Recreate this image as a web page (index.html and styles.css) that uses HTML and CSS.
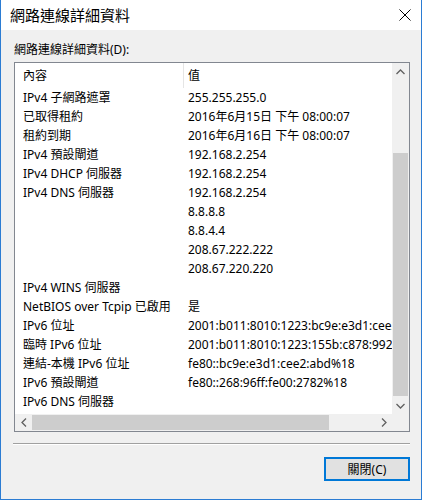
FILE: index.html
```html
<!DOCTYPE html>
<html lang="zh-Hant">
  <head>
    <meta charset="UTF-8" />
    <meta name="viewport" content="width=device-width, initial-scale=1.0" />
    <title>網路連線詳細資料</title>
    <link rel="stylesheet" href="styles.css">
  </head>
  <body>
    <div class="window">
      <!-- title bar -->
      <div class="titlebar">
        <span class="title">網路連線詳細資料</span>
        <span class="close">
          <svg width="12" height="12" viewBox="0 0 12 12">
            <path d="M0.5 0.5 L11.5 11.5 M11.5 0.5 L0.5 11.5" stroke="#000" stroke-width="1" fill="none" />
          </svg>
        </span>
      </div>

      <div class="content">
        <div class="label">網路連線詳細資料(D):</div>

        <div class="listbox">
          <div class="list-view">
            <div class="list-header">
              <div class="col-name">內容</div>
              <div class="col-value">值</div>
            </div>
            <div class="row"><div class="col-name">IPv4 子網路遮罩</div><div class="col-value">255.255.255.0</div></div>
            <div class="row"><div class="col-name">已取得租約</div><div class="col-value">2016年6月15日 下午 08:00:07</div></div>
            <div class="row"><div class="col-name">租約到期</div><div class="col-value">2016年6月16日 下午 08:00:07</div></div>
            <div class="row"><div class="col-name">IPv4 預設閘道</div><div class="col-value">192.168.2.254</div></div>
            <div class="row"><div class="col-name">IPv4 DHCP 伺服器</div><div class="col-value">192.168.2.254</div></div>
            <div class="row"><div class="col-name">IPv4 DNS 伺服器</div><div class="col-value">192.168.2.254</div></div>
            <div class="row"><div class="col-name"></div><div class="col-value">8.8.8.8</div></div>
            <div class="row"><div class="col-name"></div><div class="col-value">8.8.4.4</div></div>
            <div class="row"><div class="col-name"></div><div class="col-value">208.67.222.222</div></div>
            <div class="row"><div class="col-name"></div><div class="col-value">208.67.220.220</div></div>
            <div class="row"><div class="col-name">IPv4 WINS 伺服器</div><div class="col-value"></div></div>
            <div class="row"><div class="col-name">NetBIOS over Tcpip 已啟用</div><div class="col-value">是</div></div>
            <div class="row"><div class="col-name">IPv6 位址</div><div class="col-value">2001:b011:8010:1223:bc9e:e3d1:cee2:abd</div></div>
            <div class="row"><div class="col-name">臨時 IPv6 位址</div><div class="col-value">2001:b011:8010:1223:155b:c878:9921:4f0a</div></div>
            <div class="row"><div class="col-name">連結-本機 IPv6 位址</div><div class="col-value">fe80::bc9e:e3d1:cee2:abd%18</div></div>
            <div class="row"><div class="col-name">IPv6 預設閘道</div><div class="col-value">fe80::268:96ff:fe00:2782%18</div></div>
            <div class="row"><div class="col-name">IPv6 DNS 伺服器</div><div class="col-value"></div></div>
          </div>

          <div class="vscroll">
            <div class="arrow">
              <svg width="9" height="6" viewBox="0 0 9 6"><path d="M0.5 5 L4.5 1 L8.5 5" stroke="#606060" stroke-width="1.3" fill="none" /></svg>
            </div>
            <div class="track v-track">
              <div class="thumb v-thumb"></div>
            </div>
            <div class="arrow">
              <svg width="9" height="6" viewBox="0 0 9 6"><path d="M0.5 1 L4.5 5 L8.5 1" stroke="#606060" stroke-width="1.3" fill="none" /></svg>
            </div>
          </div>

          <div class="hscroll">
            <div class="arrow">
              <svg width="6" height="9" viewBox="0 0 6 9"><path d="M5 0.5 L1 4.5 L5 8.5" stroke="#606060" stroke-width="1.3" fill="none" /></svg>
            </div>
            <div class="track h-track">
              <div class="thumb h-thumb"></div>
            </div>
            <div class="arrow">
              <svg width="6" height="9" viewBox="0 0 6 9"><path d="M1 0.5 L5 4.5 L1 8.5" stroke="#606060" stroke-width="1.3" fill="none" /></svg>
            </div>
          </div>

          <div class="corner"></div>
        </div>

        <div class="separator"></div>

        <div class="footer">
          <button class="btn-close">關閉(C)</button>
        </div>
      </div>
    </div>
  </body>
</html>
```

FILE: styles.css
```css
body {
  margin: 0;
  padding: 0;
  font-family: "Noto Sans", "Noto Sans CJK TC", sans-serif;
  font-size: 12px;
  color: #000;
  background-color: #fff;
}
.window {
  width: 422px;
  height: 500px;
  box-sizing: border-box;
  border: 1px solid #2b7cd3;
  border-top: none;
  display: flex;
  flex-direction: column;
  background-color: #f0f0f0;
}
.titlebar {
  height: 30px;
  background-color: #fff;
  display: flex;
  align-items: center;
  justify-content: space-between;
  padding: 0 10px 0 9px;
}
.title {
  font-size: 15px;
  line-height: 20px;
}
.close {
  display: flex;
  width: 12px;
  height: 12px;
}
.content {
  flex: 1;
  display: flex;
  flex-direction: column;
  padding: 11px 11px 0 12px;
}
.label {
  line-height: 18px;
  padding-left: 1px;
  margin-bottom: 3px;
}
.listbox {
  height: 370px;
  box-sizing: border-box;
  border: 1px solid #828790;
  background-color: #fff;
  display: grid;
  grid-template-columns: 1fr 17px;
  grid-template-rows: 1fr 17px;
  margin-left: 1px;
}
.list-view {
  overflow: hidden;
  white-space: nowrap;
}
.list-header,
.row {
  display: flex;
}
.list-header {
  height: 25px;
  line-height: 25px;
}
.row {
  height: 19px;
  line-height: 19px;
}
.col-name {
  width: 160px;
  flex-shrink: 0;
  padding-left: 8px;
}
.col-value {
  flex-shrink: 0;
  padding-left: 5px;
}
.list-header .col-name {
  border-right: 1px solid #e5e5e5;
}
.list-header .col-value {
  padding-left: 4px;
}
.vscroll {
  display: flex;
  flex-direction: column;
  background-color: #f0f0f0;
}
.hscroll {
  display: flex;
  background-color: #f0f0f0;
}
.corner {
  background-color: #f0f0f0;
}
.arrow {
  width: 17px;
  height: 17px;
  display: flex;
  align-items: center;
  justify-content: center;
  flex-shrink: 0;
}
.track {
  flex: 1;
  display: flex;
}
.v-track {
  flex-direction: column;
  padding-top: 73px;
}
.v-thumb {
  height: 243px;
  margin: 0 1px;
  background-color: #cdcdcd;
}
.h-track {
  padding-right: 46px;
}
.h-thumb {
  flex: 1;
  margin: 1px 0;
  background-color: #cdcdcd;
}
.separator {
  height: 1px;
  background-color: #a0a0a0;
  border-bottom: 1px solid #fff;
  margin-top: 11px;
}
.footer {
  display: flex;
  justify-content: flex-end;
  padding-top: 12px;
}
.btn-close {
  width: 86px;
  height: 24px;
  font-family: "Noto Sans", "Noto Sans CJK TC", sans-serif;
  font-size: 12px;
  color: #000;
  background-color: #e1e1e1;
  border: 2px solid #0078d7;
  padding: 0;
}
```
